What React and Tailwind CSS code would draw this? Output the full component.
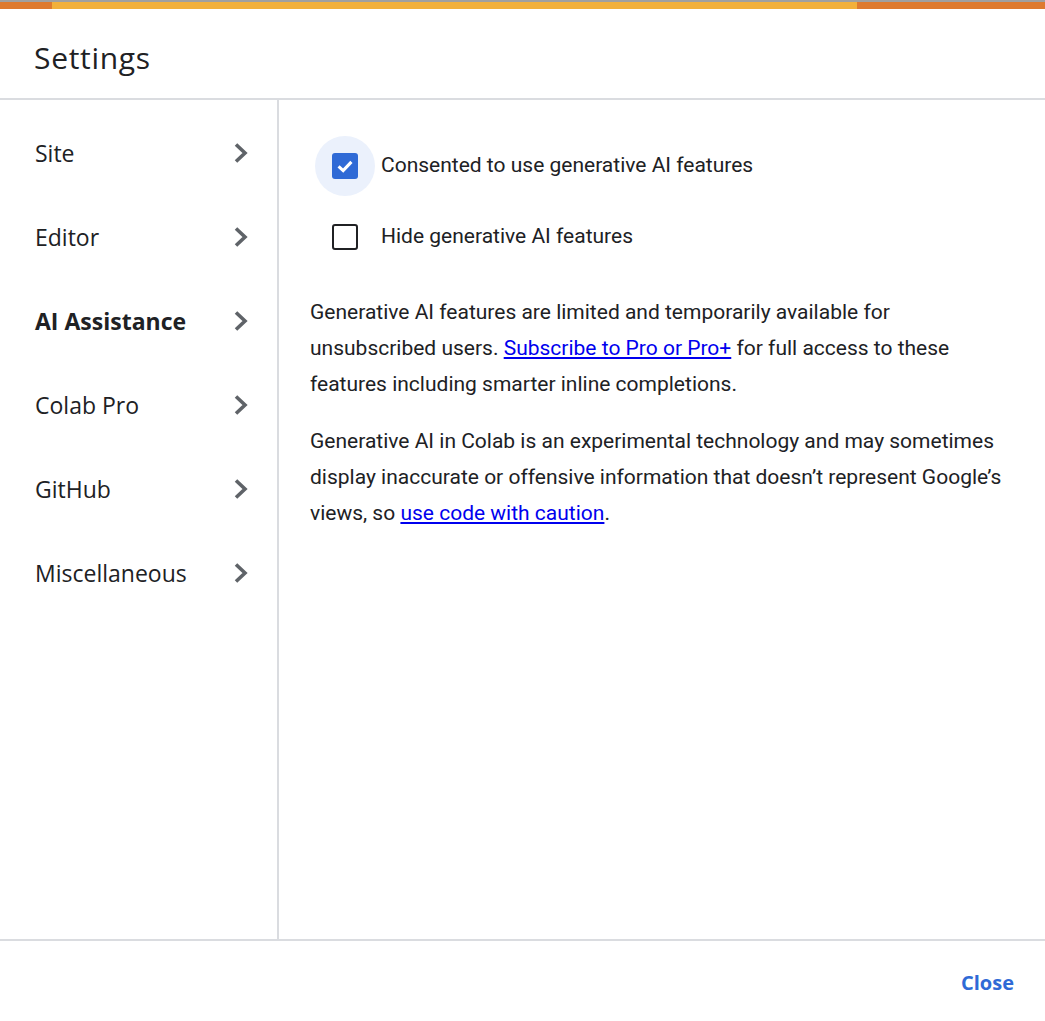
const items = ['Site', 'Editor', 'AI Assistance', 'Colab Pro', 'GitHub', 'Miscellaneous']

function Chevron() {
  return (
    <svg width="16" height="22" viewBox="0 0 16 22" className="shrink-0">
      <path d="M3 2.5 L12 11 L3 19.5" fill="none" stroke="#5f6368" strokeWidth="3.6" />
    </svg>
  )
}

function Checkbox({ checked }) {
  if (checked) {
    return (
      <span className="grid h-[26px] w-[26px] place-items-center rounded-[3px] bg-[#2f6ad6]">
        <svg width="22" height="22" viewBox="0 0 24 24">
          <path d="M5 12.5 L10 17 L19 7.5" fill="none" stroke="#fff" strokeWidth="3.4" />
        </svg>
      </span>
    )
  }
  return <span className="h-[26px] w-[26px] rounded-[3px] border-[2.5px] border-[#202124]" />
}

export default function App() {
  return (
    <div className="flex h-[1021px] w-[1045px] flex-col bg-white text-[#202124] font-['Roboto',sans-serif]">
      <div className="h-[2px] bg-[#a0a0a0]" />
      <div className="flex h-[7px]">
        <div className="w-[52px] bg-[#de7a2f]" />
        <div className="flex-1 bg-[#f2b03b]" />
        <div className="w-[188px] bg-[#de7a2f]" />
      </div>

      <div className="flex h-[91px] items-center border-b-2 border-[#dadce0] px-[34px] pt-[8px]">
        <h1 className="text-[30px] font-normal tracking-[0.7px] font-['Open_Sans',sans-serif]">Settings</h1>
      </div>

      <div className="flex flex-1 border-b-2 border-[#dadce0]">
        <nav className="w-[279px] shrink-0 border-r-2 border-[#dadce0] pt-[11px]">
          {items.map((it) => (
            <div key={it} className="flex h-[84px] items-center justify-between pl-[35px] pr-[28px]">
              <span
                className={
                  'text-[23px] font-[\'Open_Sans\',sans-serif] ' +
                  (it === 'AI Assistance' ? 'font-bold' : 'font-normal')
                }
              >
                {it}
              </span>
              <Chevron />
            </div>
          ))}
        </nav>

        <div className="flex-1 pl-[31px] pr-[28px] pt-[36px] text-[21px]">
          <div className="flex items-center pl-[5px]">
            <span className="grid h-[60px] w-[60px] place-items-center rounded-full bg-[#ebf1fc]">
              <Checkbox checked />
            </span>
            <span className="ml-[6px]">Consented to use generative AI features</span>
          </div>
          <div className="mt-[11px] flex items-center pl-[5px]">
            <span className="grid h-[60px] w-[60px] place-items-center">
              <Checkbox />
            </span>
            <span className="ml-[6px]">Hide generative AI features</span>
          </div>

          <p className="mt-[27px] leading-[36px]">
            Generative AI features are limited and temporarily available for unsubscribed users.{' '}
            <a href="#" className="text-[#0000ee] underline">Subscribe to Pro or Pro+</a> for full access to these
            features including smarter inline completions.
          </p>
          <p className="mt-[21px] leading-[36px]">
            Generative AI in Colab is an experimental technology and may sometimes display inaccurate or offensive
            information that doesn’t represent Google’s views, so{' '}
            <a href="#" className="text-[#0000ee] underline">use code with caution</a>.
          </p>
        </div>
      </div>

      <div className="flex h-[80px] items-center justify-end px-[31px] pt-[4px]">
        <button type="button" className="text-[20px] font-bold text-[#2f6ad6] font-['Open_Sans',sans-serif]">
          Close
        </button>
      </div>
    </div>
  )
}
